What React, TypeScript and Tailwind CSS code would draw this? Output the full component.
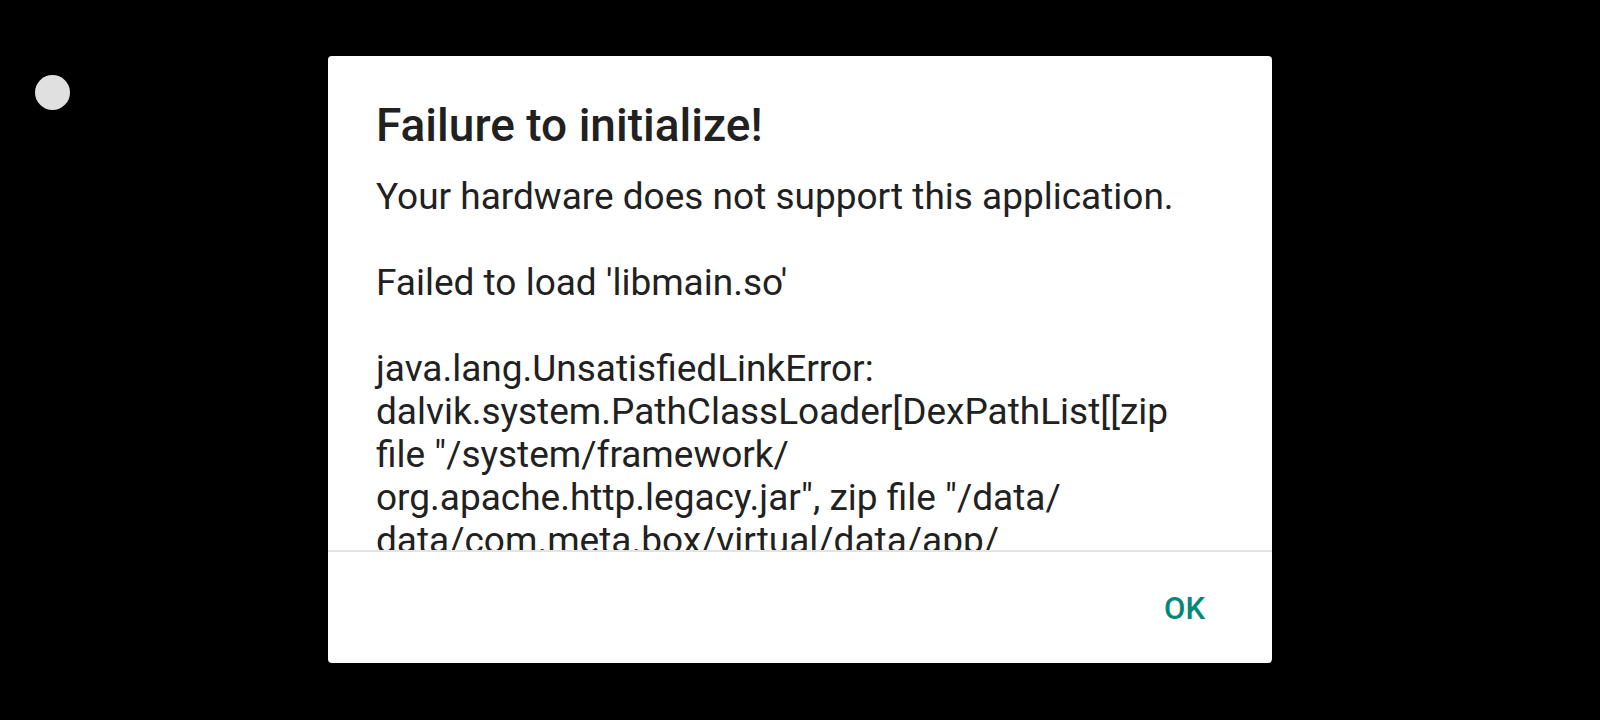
import React from "react";

const bodyLines = [
  "Your hardware does not support this application.",
  "",
  "Failed to load 'libmain.so'",
  "",
  "java.lang.UnsatisfiedLinkError:",
  "dalvik.system.PathClassLoader[DexPathList[[zip",
  'file "/system/framework/',
  'org.apache.http.legacy.jar", zip file "/data/',
  "data/com.meta.box/virtual/data/app/",
  "com.example.game-1/base.apk\"],nativeLibraryDirectories=",
];

export default function App() {
  return (
    <div className="relative h-[720px] w-[1600px] overflow-hidden bg-black font-['Roboto',sans-serif] pt-[56px] pl-[328px]">
      {/* floating assistive dot */}
      <div className="absolute left-[35px] top-[75px] h-[35px] w-[35px] rounded-full bg-[#e0e0e0]" />

      <div className="flex h-[607px] w-[944px] flex-col rounded-[4px] bg-white">
        <div className="h-[494px] overflow-hidden pl-[48px] pr-[40px] pt-[42px]">
          <h1 className="text-[46px] leading-[54px] font-medium text-[#212121]">
            Failure to initialize!
          </h1>
          <div className="mt-[23px] text-[37px] leading-[43px] text-[#212121]">
            {bodyLines.map((line, i) => (
              <div key={i} className="whitespace-nowrap h-[43px]">
                {line}
              </div>
            ))}
          </div>
        </div>
        <div className="h-[2px] bg-[#e3e3e3]" />
        <div className="flex flex-1 items-center justify-end pr-[67px] pt-[4px]">
          <button className="text-[31px] font-medium text-[#00897b]">OK</button>
        </div>
      </div>
    </div>
  );
}
